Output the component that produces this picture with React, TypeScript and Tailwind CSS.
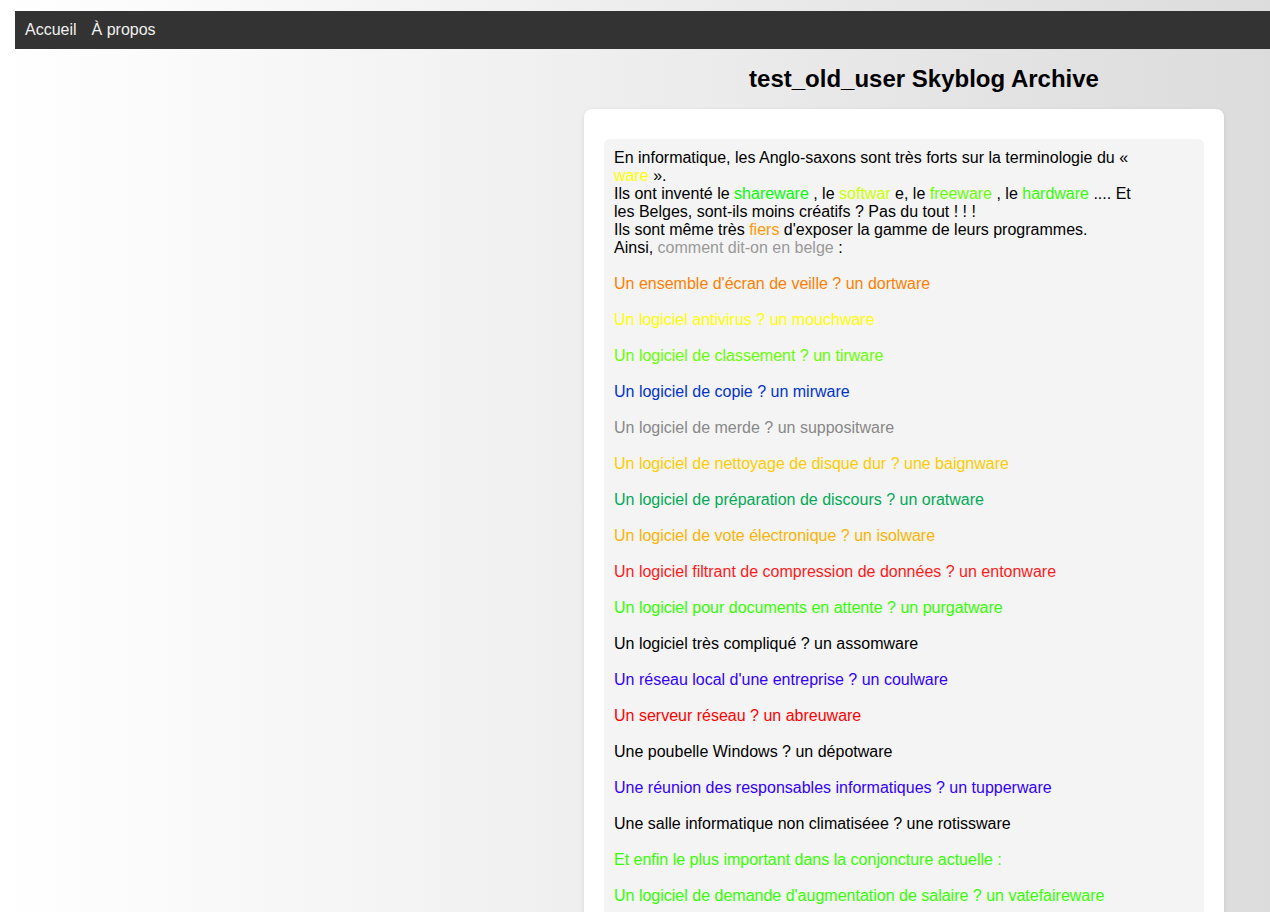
import React from "react";

const items: { text: string; color: string }[] = [
  { text: "Un ensemble d'écran de veille ? un dortware", color: "text-[#ff7f00]" },
  { text: "Un logiciel antivirus ? un mouchware", color: "text-[#ffff00]" },
  { text: "Un logiciel de classement ? un tirware", color: "text-[#66ff00]" },
  { text: "Un logiciel de copie ? un mirware", color: "text-[#0033cc]" },
  { text: "Un logiciel de merde ? un suppositware", color: "text-[#888888]" },
  { text: "Un logiciel de nettoyage de disque dur ? une baignware", color: "text-[#ffcc00]" },
  { text: "Un logiciel de préparation de discours ? un oratware", color: "text-[#00aa55]" },
  { text: "Un logiciel de vote électronique ? un isolware", color: "text-[#ffb300]" },
  { text: "Un logiciel filtrant de compression de données ? un entonware", color: "text-[#ff1a1a]" },
  { text: "Un logiciel pour documents en attente ? un purgatware", color: "text-[#33ff00]" },
  { text: "Un logiciel très compliqué ? un assomware", color: "text-black" },
  { text: "Un réseau local d'une entreprise ? un coulware", color: "text-[#3300ff]" },
  { text: "Un serveur réseau ? un abreuware", color: "text-[#ff0000]" },
  { text: "Une poubelle Windows ? un dépotware", color: "text-black" },
  { text: "Une réunion des responsables informatiques ? un tupperware", color: "text-[#3300ff]" },
  { text: "Une salle informatique non climatiséee ? une rotissware", color: "text-black" },
  { text: "Et enfin le plus important dans la conjoncture actuelle :", color: "text-[#33ff00]" },
  { text: "Un logiciel de demande d'augmentation de salaire ? un vatefaireware", color: "text-[#33ff00]" },
];

export default function App() {
  return (
    <div className="min-h-screen bg-gradient-to-r from-white to-[#dcdcdc] pt-[11px] pl-[15px] font-['Liberation_Sans',Arial,sans-serif] text-[16px] text-black">
      <nav className="h-[38px] bg-[#333333] flex items-center gap-[15px] px-[10px] text-[#f0f0f0] leading-[18px]">
        <a className="cursor-pointer">Accueil</a>
        <a className="cursor-pointer">À propos</a>
      </nav>
      <div className="flex">
        <div className="w-[569px] shrink-0" />
        <div className="w-[680px] shrink-0">
          <h1 className="text-center font-bold text-[24px] leading-[28px] mt-[16px] mb-[16px]">
            test_old_user Skyblog Archive
          </h1>
          <div className="w-[640px] bg-white rounded-[8px] shadow-[0_1px_4px_rgba(0,0,0,0.1)] px-[20px] pt-[30px] pb-[20px]">
            <div className="bg-[#f4f4f4] rounded-[6px] px-[10px] pt-[10px] pb-[18px] leading-[18px]">
              <div className="w-[530px]">
                En informatique, les Anglo-saxons sont très forts sur la terminologie du «{" "}
                <span className="text-[#ffff00]">ware</span> ».
                <br />
                Ils ont inventé le <span className="text-[#00ff00]">shareware</span> , le{" "}
                <span className="text-[#ccff00]">softwar</span> e, le{" "}
                <span className="text-[#66ff00]">freeware</span> , le{" "}
                <span className="text-[#33ff00]">hardware</span> .... Et les Belges, sont-ils moins créatifs ? Pas du tout ! ! !
                <br />
                Ils sont même très <span className="text-[#ff9900]">fiers</span> d'exposer la gamme de leurs programmes.
                <br />
                Ainsi, <span className="text-[#999999]">comment dit-on en belge</span> :
              </div>
              {items.map((it, i) => (
                <p key={i} className={`mt-[18px] ${it.color}`}>
                  {it.text}
                </p>
              ))}
            </div>
          </div>
        </div>
      </div>
    </div>
  );
}
